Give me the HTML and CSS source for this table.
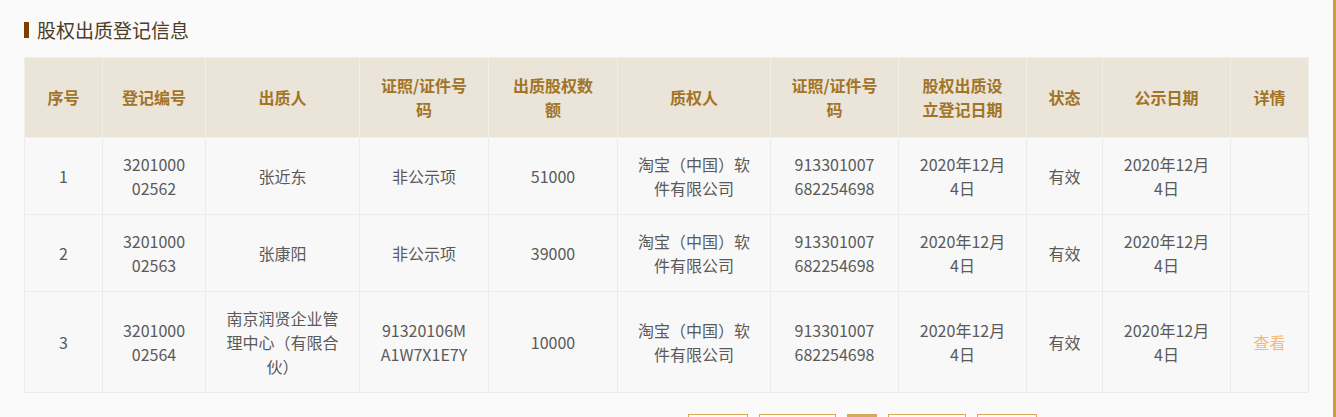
FILE: index.html
```html
<!DOCTYPE html>
<html lang="zh-CN">
<head>
<meta charset="utf-8">
<title>股权出质登记信息</title>
<link rel="stylesheet" href="styles.css">
</head>
<body>
<div class="page">
  <main class="content">
    <h2 class="title"><span class="title-bar"></span>股权出质登记信息</h2>
    <table class="grid">
      <colgroup>
        <col style="width:78px"><col style="width:103px"><col style="width:154px"><col style="width:129px"><col style="width:129px"><col style="width:153px"><col style="width:128px"><col style="width:128px"><col style="width:76px"><col style="width:128px"><col style="width:78px">
      </colgroup>
      <thead>
        <tr>
          <th>序号</th>
          <th>登记编号</th>
          <th>出质人</th>
          <th>证照/证件号<br>码</th>
          <th>出质股权数<br>额</th>
          <th>质权人</th>
          <th>证照/证件号<br>码</th>
          <th>股权出质设<br>立登记日期</th>
          <th>状态</th>
          <th>公示日期</th>
          <th>详情</th>
        </tr>
      </thead>
      <tbody>
        <tr>
          <td>1</td>
          <td>3201000<br>02562</td>
          <td>张近东</td>
          <td>非公示项</td>
          <td>51000</td>
          <td>淘宝（中国）软<br>件有限公司</td>
          <td>913301007<br>682254698</td>
          <td>2020年12月<br>4日</td>
          <td>有效</td>
          <td>2020年12月<br>4日</td>
          <td></td>
        </tr>
        <tr>
          <td>2</td>
          <td>3201000<br>02563</td>
          <td>张康阳</td>
          <td>非公示项</td>
          <td>39000</td>
          <td>淘宝（中国）软<br>件有限公司</td>
          <td>913301007<br>682254698</td>
          <td>2020年12月<br>4日</td>
          <td>有效</td>
          <td>2020年12月<br>4日</td>
          <td></td>
        </tr>
        <tr>
          <td>3</td>
          <td>3201000<br>02564</td>
          <td>南京润贤企业管<br>理中心（有限合<br>伙）</td>
          <td>91320106M<br>A1W7X1E7Y</td>
          <td>10000</td>
          <td>淘宝（中国）软<br>件有限公司</td>
          <td>913301007<br>682254698</td>
          <td>2020年12月<br>4日</td>
          <td>有效</td>
          <td>2020年12月<br>4日</td>
          <td><a class="link" href="#">查看</a></td>
        </tr>
      </tbody>
    </table>
    <nav class="pager">
      <a class="pg pg-w60" href="#">首页</a>
      <a class="pg pg-w77" href="#">上一页</a>
      <a class="pg pg-cur" href="#">1</a>
      <a class="pg pg-w78" href="#">下一页</a>
      <a class="pg pg-w60" href="#">末页</a>
    </nav>
  </main>
  <div class="edge"></div>
</div>
</body>
</html>
```
FILE: styles.css
```css
html, body {
  margin: 0;
  padding: 0;
  height: 100%;
  overflow: hidden;
  background: #fafafa;
}
body {
  font-family: "Noto Sans CJK SC", "Microsoft YaHei", sans-serif;
  color: #555;
}
.page {
  display: flex;
  height: 100%;
}
.content {
  flex: 1;
  padding: 20px 24px 0 24px;
}
.edge {
  width: 4px;
  background: #d09d3e;
  flex-shrink: 0;
}
.title {
  display: flex;
  align-items: center;
  margin: 0 0 17px 0;
  font-size: 19px;
  font-weight: normal;
  line-height: 20px;
  color: #4e3b28;
}
.title-bar {
  width: 5px;
  height: 16px;
  background: #7b3f00;
  margin-right: 8px;
}
.grid {
  width: 1284px;
  border-collapse: collapse;
  table-layout: fixed;
  font-size: 16px;
  line-height: 24px;
}
.grid th {
  background: #ebe4d9;
  color: #a17428;
  font-weight: bold;
  padding: 15px 0 16px;
  border: 1px solid #f3efe8;
  text-align: center;
  white-space: nowrap;
}
.grid td {
  background: #f8f8f8;
  color: #5a5a5a;
  padding: 14px 0 14px;
  border: 1px solid #ebebeb;
  text-align: center;
  white-space: nowrap;
}
.link {
  color: #f7b77a;
  text-decoration: none;
}
.pager {
  display: flex;
  gap: 11px;
  padding-left: 664px;
  margin-top: 21px;
}
.pg {
  display: block;
  height: 40px;
  box-sizing: border-box;
  border: 1px solid #d4aa5c;
  color: #8a6a3a;
  font-size: 13px;
  padding-top: 12px;
  line-height: 26px;
  text-align: center;
  text-decoration: none;
}
.pg-w60 { width: 60px; }
.pg-w77 { width: 77px; }
.pg-w78 { width: 78px; }
.pg-cur {
  width: 30px;
  background: #d4aa5c;
  color: #fff;
}
```
